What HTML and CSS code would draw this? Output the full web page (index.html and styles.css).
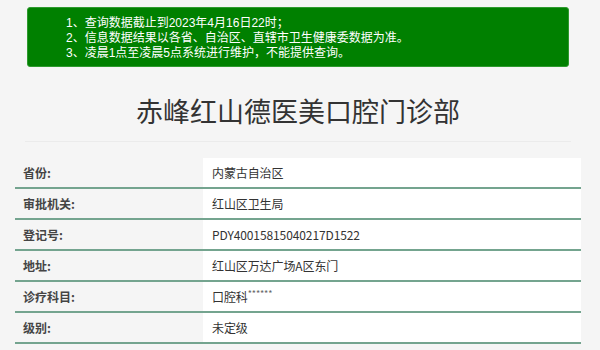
FILE: index.html
```html
<!DOCTYPE html>
<html lang="zh-CN">
<head>
<meta charset="utf-8">
<title>赤峰红山德医美口腔门诊部</title>
<link rel="stylesheet" href="styles.css">
</head>
<body>
<div class="wrap">
  <div class="notice">
    <p>1、查询数据截止到2023年4月16日22时；</p>
    <p>2、信息数据结果以各省、自治区、直辖市卫生健康委数据为准。</p>
    <p>3、凌晨1点至凌晨5点系统进行维护，不能提供查询。</p>
  </div>
  <h1 class="title">赤峰红山德医美口腔门诊部</h1>
  <div class="info">
    <div class="row"><div class="label">省份:</div><div class="value">内蒙古自治区</div></div>
    <div class="row"><div class="label">审批机关:</div><div class="value">红山区卫生局</div></div>
    <div class="row"><div class="label">登记号:</div><div class="value">PDY40015815040217D1522</div></div>
    <div class="row"><div class="label">地址:</div><div class="value">红山区万达广场A区东门</div></div>
    <div class="row"><div class="label">诊疗科目:</div><div class="value">口腔科<span class="stars">******</span></div></div>
    <div class="row"><div class="label">级别:</div><div class="value">未定级</div></div>
  </div>
</div>
</body>
</html>
```
FILE: styles.css
```css
html, body {
  margin: 0;
  padding: 0;
  background: #f5f5f5;
  font-family: "Noto Sans CJK SC", "Noto Sans", sans-serif;
  color: #333;
}
.wrap {
  width: 566px;
  margin-left: 15px;
  padding-top: 7px;
}
.notice {
  margin: 0 12px;
  height: 60px;
  box-sizing: border-box;
  background: #008000;
  border: 1px solid #2e9a2e;
  border-radius: 3px;
  padding: 8px 0 0 38px;
  color: #fff;
  font-family: "Liberation Sans", "Noto Sans CJK SC", sans-serif;
  font-size: 12px;
  line-height: 15px;
}
.notice p {
  margin: 0;
}
.title {
  margin: 0 10px;
  padding: 25px 0 12px;
  text-align: center;
  font-size: 27px;
  font-weight: normal;
  line-height: 37px;
  color: #333;
  border-bottom: 1px solid #ebebeb;
}
.info {
  margin-top: 16px;
}
.row {
  display: flex;
  box-sizing: border-box;
  height: 31px;
  border-bottom: 2px solid #74a48f;
  font-size: 12px;
  line-height: 29px;
}
.label {
  width: 188px;
  padding-left: 8px;
  box-sizing: border-box;
  font-weight: bold;
  color: #444;
}
.value {
  flex: 1;
  background: #fff;
  padding-left: 9px;
  letter-spacing: -0.1px;
}
.stars {
  font-size: 9px;
  vertical-align: top;
  line-height: 24px;
  color: #666;
}
```
